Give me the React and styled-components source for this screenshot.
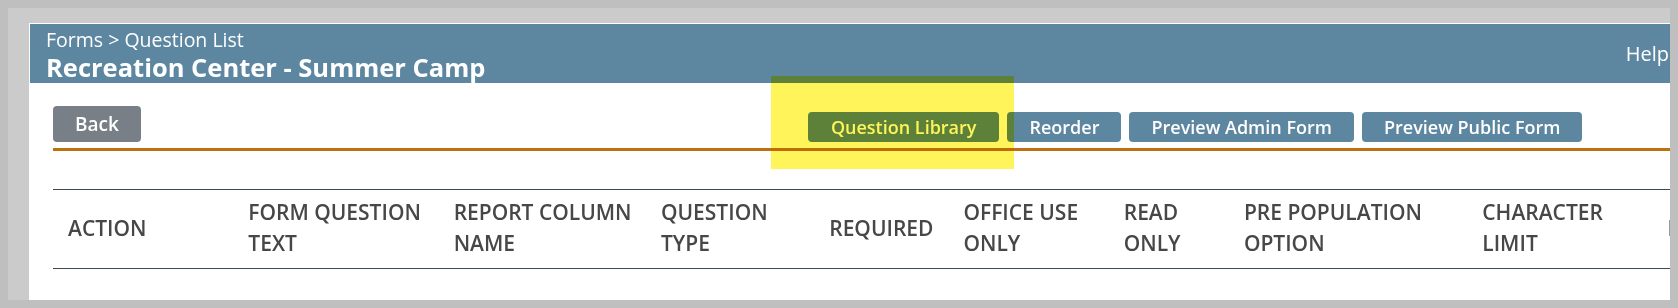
import React from "react";
import styled, { createGlobalStyle } from "styled-components";

const GlobalStyle = createGlobalStyle`
  html, body {
    margin: 0;
    padding: 0;
    background: #bfbfbf;
    font-family: "Open Sans", "Liberation Sans", sans-serif;
  }
  #root {
    height: 308px;
    overflow: hidden;
  }
`;

const Frame = styled.div`
  margin: 8px 0 0 8px;
  width: 1662px;
  height: 292px;
  background: #cbcbcb;
  padding: 15px 0 0 21px;
  box-sizing: border-box;
  overflow: hidden;
`;

const Panel = styled.div`
  position: relative;
  width: 1720px;
  height: 400px;
  background: #fff;
  padding: 1px 0 0 1px;
  box-sizing: border-box;
`;

const Header = styled.div`
  display: flex;
  justify-content: space-between;
  align-items: center;
  height: 59px;
  background: #5d87a0;
  color: #fff;
  padding: 0 80px 0 16px;
`;

const Titles = styled.div`
  display: flex;
  flex-direction: column;
  margin-top: 4px;
`;

const Crumbs = styled.div`
  font-size: 19.5px;
  line-height: 22px;
  font-weight: 400;
`;

const Title = styled.h1`
  margin: 1px 0 0;
  font-size: 25.5px;
  line-height: 30px;
  font-weight: 700;
`;

const HelpLink = styled.a`
  font-size: 20px;
  font-weight: 400;
  color: #fff;
  text-decoration: none;
`;

const Content = styled.div`
  padding: 23px 0 0 23px;
`;

const Toolbar = styled.div`
  display: flex;
  align-items: flex-end;
  padding-bottom: 6px;
  border-bottom: 3px solid #c0700f;
`;

const ButtonGroup = styled.div`
  display: flex;
  gap: 8px;
  margin-left: 667px;
`;

const Button = styled.button`
  font-family: inherit;
  font-size: ${(p) => (p.$gray ? "19px" : "18px")};
  font-weight: 600;
  color: #fff;
  background: ${(p) => (p.$gray ? "#787f87" : "#5d87a0")};
  border: none;
  border-radius: 4px;
  height: ${(p) => (p.$gray ? "36px" : "30px")};
  padding: 0 ${(p) => p.$pad || 22}px;
  cursor: pointer;
`;

const Table = styled.table`
  margin-top: 38px;
  border-collapse: collapse;
  table-layout: fixed;
  width: 1800px;
  border-top: 1px solid #3d4a55;
  border-bottom: 1px solid #3d4a55;
`;

const Th = styled.th`
  text-align: left;
  vertical-align: middle;
  font-size: 21px;
  line-height: 31px;
  font-weight: 600;
  color: #474747;
  text-transform: uppercase;
  padding: 7px 6px 9px 15px;
  width: ${(p) => p.$w}px;
  box-sizing: border-box;
`;

const Highlight = styled.div`
  position: absolute;
  left: 742px;
  top: 53px;
  width: 243px;
  height: 93px;
  background: #fff459;
  mix-blend-mode: multiply;
  pointer-events: none;
`;

const columns = [
  { label: "Action", w: 180 },
  { label: "Form Question Text", w: 205 },
  { label: "Report Column Name", w: 207 },
  { label: "Question Type", w: 168 },
  { label: "Required", w: 134 },
  { label: "Office Use Only", w: 160 },
  { label: "Read Only", w: 120 },
  { label: "Pre Population Option", w: 238 },
  { label: "Character Limit", w: 185 },
  { label: "Last Updated", w: 200 },
];

const App = () => {
  return (
    <>
      <GlobalStyle />
      <Frame>
        <Panel>
          <Header>
            <Titles>
              <Crumbs>Forms &gt; Question List</Crumbs>
              <Title>Recreation Center - Summer Camp</Title>
            </Titles>
            <HelpLink href="#">Help</HelpLink>
          </Header>
          <Content>
            <Toolbar>
              <Button $gray $pad={22}>Back</Button>
              <ButtonGroup>
                <Button $pad={23}>Question Library</Button>
                <Button>Reorder</Button>
                <Button>Preview Admin Form</Button>
                <Button>Preview Public Form</Button>
              </ButtonGroup>
            </Toolbar>
            <Table>
              <thead>
                <tr>
                  {columns.map((c) => (
                    <Th key={c.label} $w={c.w}>
                      {c.label}
                    </Th>
                  ))}
                </tr>
              </thead>
            </Table>
          </Content>
          <Highlight />
        </Panel>
      </Frame>
    </>
  );
};

export default App;
